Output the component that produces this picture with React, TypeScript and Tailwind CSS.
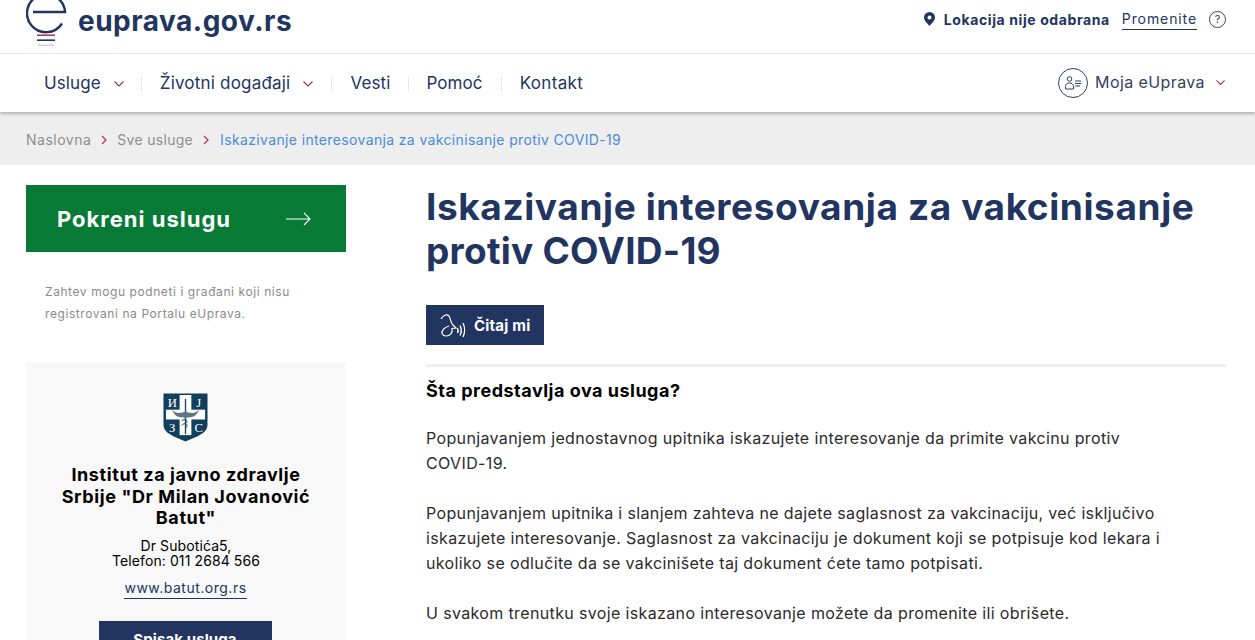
import React from "react";

const navy = "#223561";

function Chevron({ color = "#8f3a4a", size = 10 }: { color?: string; size?: number }) {
  return (
    <svg width={size} height={size * 0.6} viewBox="0 0 10 6" fill="none" stroke={color} strokeWidth="1.2">
      <path d="M0.5 0.5 L5 5 L9.5 0.5" />
    </svg>
  );
}

function Crumb() {
  return (
    <svg width="6" height="10" viewBox="0 0 6 10" fill="none" stroke="#b0404f" strokeWidth="1.3">
      <path d="M1 1 L5 5 L1 9" />
    </svg>
  );
}

function Logo() {
  return (
    <svg width="42" height="48" viewBox="0 0 42 48" fill="none" className="shrink-0">
      <path d="M7 12 H39 A19 19 0 1 0 36 23.5" stroke={navy} strokeWidth="2.4" />
      <rect x="11" y="34.4" width="18" height="1.6" fill="#a8424f" />
      <rect x="11" y="39.4" width="18" height="1.6" fill="#223561" />
      <rect x="12" y="44.6" width="16" height="1.2" fill="#c9c9c9" />
    </svg>
  );
}

function Shield() {
  return (
    <svg width="45" height="49" viewBox="0 0 46 50" className="mr-[2px] shrink-0">
      <path d="M0.5 0.5 H45.5 V33 C45.5 41 34 45 23 49.5 C12 45 0.5 41 0.5 33 Z" fill="#123f5c" />
      <rect x="17" y="2" width="12" height="41" fill="#fff" />
      <rect x="3" y="17" width="40" height="10" fill="#fff" />
      <path d="M23 6 V42" stroke="#1e4a66" strokeWidth="1.4" />
      <path d="M9 17 C15 23 20 19 23 19 C26 19 31 23 37 17 C32 28 26 23 23 26 C20 23 14 28 9 17 Z" fill="#5f7484" />
      <path d="M19 33 C23 29 27 33 23 36 M19 28 C23 26 27 29 23 31" stroke="#123f5c" strokeWidth="1" fill="none" />
      <g fill="#fff" fontFamily="'Liberation Serif', serif" fontSize="13" textAnchor="middle">
        <text x="9.5" y="14.5">И</text>
        <text x="36.5" y="14.5">Ј</text>
        <text x="9.5" y="40">З</text>
        <text x="36.5" y="40">С</text>
      </g>
    </svg>
  );
}

function NavSep() {
  return <span className="block w-px h-3.5 bg-[#e8e8e8]" />;
}

export default function App() {
  return (
    <div className="h-screen overflow-hidden bg-white font-['Inter','Liberation_Sans',sans-serif] text-[#223561]">
      <header className="h-[54px] border-b border-[#ececec] flex items-center pl-[26px] pr-[29px]">
        <div className="flex items-start h-full w-full overflow-hidden">
          <Logo />
          <span className="ml-[10px] mt-[4px] text-[28px] leading-[34px] font-bold tracking-[0.5px]">euprava.gov.rs</span>
          <div className="ml-auto flex items-center h-[38px]">
            <svg width="11" height="14" viewBox="0 0 11 14" className="mr-[9px]">
              <path fillRule="evenodd" d="M5.5 0 A5.5 5.5 0 0 1 11 5.5 C11 9 7 12 5.5 14 C4 12 0 9 0 5.5 A5.5 5.5 0 0 1 5.5 0 Z M5.5 3.5 A2 2 0 1 0 5.5 7.5 A2 2 0 1 0 5.5 3.5 Z" fill={navy} />
            </svg>
            <span className="text-[14px] font-bold tracking-[0.6px]">Lokacija nije odabrana</span>
            <span className="ml-3 text-[14px] tracking-[0.9px] border-b border-[#223561] leading-[20px]">Promenite</span>
            <span className="ml-3 w-[17px] h-[17px] rounded-full border border-[#33405f] flex items-center justify-center text-[11px] text-[#33405f]">?</span>
          </div>
        </div>
      </header>

      <nav className="h-[58px] flex items-center pl-[44px] pr-[30px] shadow-[0_2px_3px_rgba(0,0,0,0.25)] relative text-[17px] tracking-[0.1px]">
        <div className="flex items-center pt-[2px]">
          <span>Usluge</span>
          <span className="ml-[13px]"><Chevron /></span>
          <span className="ml-[17px]"><NavSep /></span>
          <span className="ml-[18px] tracking-[0.2px]">Životni događaji</span>
          <span className="ml-[13px]"><Chevron /></span>
          <span className="ml-[18px]"><NavSep /></span>
          <span className="ml-[18px]">Vesti</span>
          <span className="ml-[18px]"><NavSep /></span>
          <span className="ml-[17px]">Pomoć</span>
          <span className="ml-[18px]"><NavSep /></span>
          <span className="ml-[18px] tracking-[0.35px]">Kontakt</span>
        </div>
        <div className="ml-auto flex items-center">
          <span className="w-[30px] h-[30px] rounded-full border border-[#33405f] flex items-center justify-center">
            <svg width="18" height="14" viewBox="0 0 18 14" fill="none" stroke="#33405f" strokeWidth="1">
              <circle cx="5.5" cy="3" r="2.3" />
              <path d="M1.5 13 V10.5 C1.5 8 3.5 7 5.5 7 C7.5 7 9.5 8 9.5 10.5 V13 Z" />
              <path d="M11 5 H17 M11 7.5 H17 M11 10 H16" />
            </svg>
          </span>
          <span className="ml-[7px] mb-[2px] text-[#33405f] text-[16px] tracking-[0.4px]">Moja eUprava</span>
          <span className="ml-[11px]"><Chevron size={9} /></span>
        </div>
      </nav>

      <div className="h-[53px] bg-[#eeeeee] flex items-center pl-[26px] pt-[2px] text-[14px]">
        <span className="text-[#8e8e8e] tracking-[0.5px]">Naslovna</span>
        <span className="ml-[10px]"><Crumb /></span>
        <span className="ml-[10px] text-[#8e8e8e] tracking-[0.3px]">Sve usluge</span>
        <span className="ml-[10px]"><Crumb /></span>
        <span className="ml-[11px] text-[#4a8cd8] tracking-[0.36px]">Iskazivanje interesovanja za vakcinisanje protiv COVID-19</span>
      </div>

      <main className="flex pl-[26px] pr-[29px] pt-[20px]">
        <aside className="w-[320px] shrink-0">
          <div className="h-[67px] bg-[#077a35] flex items-center justify-between pl-[31px] pr-[35px] text-white">
            <span className="text-[22px] font-bold tracking-[1px] pt-[2px]">Pokreni uslugu</span>
            <svg width="25" height="14" viewBox="0 0 25 14" fill="none" stroke="#fff" strokeWidth="1.1">
              <path d="M0 7 H24 M18 1 L24 7 L18 13" />
            </svg>
          </div>
          <p className="mt-[29px] pl-[19px] pr-[20px] text-[12px] leading-[22px] text-[#8a8a8a] tracking-[0.58px]">
            Zahtev mogu podneti i građani koji nisu registrovani na Portalu eUprava.
          </p>
          <div className="mt-[37px] h-[400px] bg-[#f8f8f9] flex flex-col items-center pt-[31px] text-black">
            <Shield />
            <h3 className="mt-[22px] px-[33px] text-center text-[18px] leading-[21.5px] font-bold tracking-[0.6px]">
              Institut za javno zdravlje Srbije "Dr Milan Jovanović Batut"
            </h3>
            <p className="mt-[9px] text-center text-[14px] leading-[15px] tracking-[0.1px]">
              Dr Subotića5,<br />Telefon: 011 2684 566
            </p>
            <span className="mt-[10px] mr-[1px] text-[14px] leading-[20px] text-[#223561] border-b border-[#223561] tracking-[0.5px]">www.batut.org.rs</span>
            <span className="mt-[22px] mr-[2px] w-[173px] h-[40px] bg-[#223561] text-white text-[15px] font-bold flex items-center justify-center tracking-[0.1px] shrink-0">Spisak usluga</span>
          </div>
        </aside>

        <section className="ml-[80px] flex-1 min-w-0">
          <h1 className="text-[37px] leading-[44px] font-bold tracking-[0.6px]">
            Iskazivanje interesovanja za vakcinisanje <span className="tracking-[0.25px]">protiv COVID-19</span>
          </h1>
          <div className="mt-[32px] w-[118px] h-[40px] bg-[#223561] text-white flex items-center pl-[14px] gap-[8px]">
            <svg width="26" height="25" viewBox="0 0 26 25" fill="none" stroke="#fff" strokeWidth="1.2">
              <path d="M1 6 C3 2 7 1 9 3 C11 6 10 9 13 12 L16 15 L12 15.5 C13 20 10 23 6 23 C2 23 1 19 3 17 C4 15 6 14 9 13" />
              <path d="M17.5 15 C18.3 16.5 18.3 18.5 17.5 20 M20 12.5 C21.5 15.5 21.5 19.5 20 22.5 M23 10 C25 14 25 20 23 24" strokeWidth="1.4" />
            </svg>
            <span className="text-[15px] font-bold tracking-[0.2px] pt-[2px]">Čitaj mi</span>
          </div>
          <div className="mt-[19px] h-[3px] bg-[#eeeeee]" />
          <h2 className="mt-[12px] text-[18px] leading-[24px] font-bold text-black tracking-[0.5px]">Šta predstavlja ova usluga?</h2>
          <div className="mt-[23px] max-w-[760px] text-[16px] leading-[25px] text-[#2b2b2b] tracking-[0.36px]">
            <p>Popunjavanjem jednostavnog upitnika iskazujete interesovanje da primite vakcinu protiv <span className="whitespace-nowrap">COVID-19.</span></p>
            <p className="mt-[25px]">Popunjavanjem upitnika i slanjem zahteva ne dajete saglasnost za vakcinaciju, već isključivo iskazujete interesovanje. Saglasnost za vakcinaciju je dokument koji se potpisuje kod lekara i ukoliko se odlučite da se vakcinišete taj dokument ćete tamo potpisati.</p>
            <p className="mt-[25px]">U svakom trenutku svoje iskazano interesovanje možete da promenite ili obrišete.</p>
          </div>
        </section>
      </main>
    </div>
  );
}
